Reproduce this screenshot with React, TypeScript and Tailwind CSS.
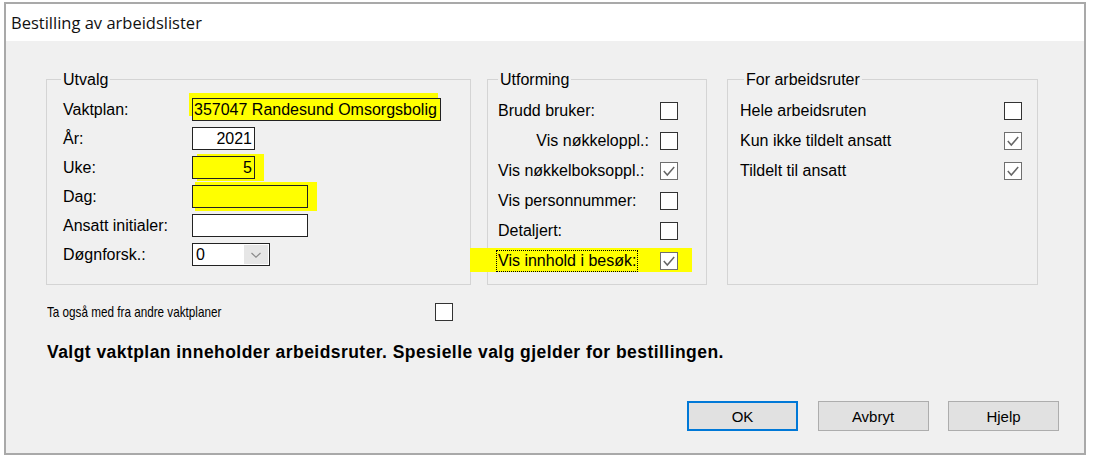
import React from "react";

function Box({ checked }: { checked?: boolean }) {
  return (
    <div
      className={`w-[18px] h-[18px] shrink-0 border bg-white flex items-center justify-center ${
        checked ? "border-[#6f6f6f]" : "border-[#333333]"
      }`}
    >
      {checked && (
        <svg width="14" height="14" viewBox="0 0 14 14">
          <path d="M1.8 7 L5.3 11 L12.2 3" fill="none" stroke="#666666" strokeWidth="1.5" />
        </svg>
      )}
    </div>
  );
}

function Chevron() {
  return (
    <svg width="12" height="8" viewBox="0 0 12 8">
      <path d="M1.5 2 L6 6.2 L10.5 2" fill="none" stroke="#8a8a8a" strokeWidth="1.2" />
    </svg>
  );
}

export default function App() {
  return (
    <div className="w-[1093px] h-[461px] bg-white pt-[2px] pl-[4px] font-['Liberation_Sans',Arial,sans-serif] text-[16px] text-black leading-none">
      <div className="w-[1082px] h-[453px] border-2 border-[#a9a9a9] flex flex-col">
        {/* Title bar */}
        <div className="h-[37px] bg-white flex items-center pl-[5px] pt-[1px] shrink-0">
          <span className="font-['Open_Sans',sans-serif] text-[16.5px] text-[#111]">Bestilling av arbeidslister</span>
        </div>
        {/* Body */}
        <div className="flex-1 bg-[#f0f0f0] pl-[40px] pt-[30px] flex flex-col">
          <div className="flex">
            {/* Utvalg */}
            <fieldset className="w-[425px] h-[214px] border border-[#d4d4d4] px-0">
              <legend className="ml-[14px] px-[2px] leading-[17px]">Utvalg</legend>
              <div className="pl-[16px] pt-[7px] flex flex-col">
                <div className="h-[29px] flex items-center">
                  <span className="w-[129px]">Vaktplan:</span>
                  <div className="w-[249px] h-[23px] border border-[#222] bg-[#ffff00] shadow-[-3px_-5px_0_0_#ffff00] flex items-center pl-[1px] whitespace-nowrap overflow-hidden">
                    357047 Randesund Omsorgsbolig
                  </div>
                </div>
                <div className="h-[29px] flex items-center">
                  <span className="w-[129px]">År:</span>
                  <div className="w-[63px] h-[23px] border border-[#222] bg-white flex items-center justify-end pr-[2px]">2021</div>
                </div>
                <div className="h-[29px] flex items-center">
                  <span className="w-[129px]">Uke:</span>
                  <div className="w-[63px] h-[23px] border border-[#222] bg-[#ffff00] shadow-[7px_0_0_2px_#ffff00] flex items-center justify-end pr-[2px]">5</div>
                </div>
                <div className="h-[29px] flex items-center">
                  <span className="w-[129px]">Dag:</span>
                  <div className="w-[116px] h-[23px] border border-[#222] bg-[#ffff00] shadow-[6px_0_0_3px_#ffff00]"></div>
                </div>
                <div className="h-[29px] flex items-center">
                  <span className="w-[129px]">Ansatt initialer:</span>
                  <div className="w-[116px] h-[23px] border border-[#222] bg-white"></div>
                </div>
                <div className="h-[29px] flex items-center">
                  <span className="w-[129px]">Døgnforsk.:</span>
                  <div className="w-[78px] h-[23px] border border-[#222] bg-white flex items-center">
                    <span className="pl-[3px]">0</span>
                    <div className="ml-auto mr-[1px] w-[24px] h-[19px] bg-[#e6e6e6] flex items-center justify-center">
                      <Chevron />
                    </div>
                  </div>
                </div>
              </div>
            </fieldset>

            {/* Utforming */}
            <fieldset className="ml-[16px] w-[220px] h-[214px] border border-[#d4d4d4] px-0">
              <legend className="ml-[10px] px-[2px] leading-[17px]">Utforming</legend>
              <div className="pl-[10px] pr-[28px] pt-[8px] flex flex-col">
                <div className="h-[30px] flex items-center justify-between">
                  <span>Brudd bruker:</span>
                  <Box />
                </div>
                <div className="h-[30px] flex items-center justify-end gap-[11px]">
                  <span>Vis nøkkeloppl.:</span>
                  <Box />
                </div>
                <div className="h-[30px] flex items-center justify-between">
                  <span>Vis nøkkelboksoppl.:</span>
                  <Box checked />
                </div>
                <div className="h-[30px] flex items-center justify-between">
                  <span>Vis personnummer:</span>
                  <Box />
                </div>
                <div className="h-[30px] flex items-center justify-between">
                  <span>Detaljert:</span>
                  <Box />
                </div>
                <div className="relative h-[30px] flex items-center justify-between">
                  <div className="absolute left-[-28px] right-[-14px] top-[2px] bottom-[4px] bg-[#ffff00]"></div>
                  <span className="relative -ml-[2px] px-[1px] py-[2px] border border-dotted border-black">Vis innhold i besøk:</span>
                  <div className="relative">
                    <Box checked />
                  </div>
                </div>
              </div>
            </fieldset>

            {/* For arbeidsruter */}
            <fieldset className="ml-[20px] w-[311px] h-[214px] border border-[#d4d4d4] px-0">
              <legend className="ml-[16px] px-[2px] leading-[17px]">For arbeidsruter</legend>
              <div className="pl-[12px] pr-[15px] pt-[8px] flex flex-col">
                <div className="h-[30px] flex items-center justify-between">
                  <span>Hele arbeidsruten</span>
                  <Box />
                </div>
                <div className="h-[30px] flex items-center justify-between">
                  <span>Kun ikke tildelt ansatt</span>
                  <Box checked />
                </div>
                <div className="h-[30px] flex items-center justify-between">
                  <span>Tildelt til ansatt</span>
                  <Box checked />
                </div>
              </div>
            </fieldset>
          </div>

          <div className="mt-[17px] h-[20px] flex items-center pl-[1px]">
            <div className="w-[388px] whitespace-nowrap">
              <span className="inline-block origin-left scale-x-[0.78] text-[15px]">Ta også med fra andre vaktplaner</span>
            </div>
            <Box />
          </div>

          <div className="mt-[22px] h-[18px] flex items-center pl-[1px] font-bold text-[17.5px] tracking-[0.45px] whitespace-nowrap">
            Valgt vaktplan inneholder arbeidsruter. Spesielle valg gjelder for bestillingen.
          </div>

          <div className="mt-[39px] flex justify-end gap-[19.5px] pr-[25px]">
            <button className="w-[111px] h-[30px] bg-[#e1e1e1] border-2 border-[#0078d7] text-[15px]">OK</button>
            <button className="w-[111px] h-[30px] bg-[#e1e1e1] border border-[#adadad] text-[15px]">Avbryt</button>
            <button className="w-[111px] h-[30px] bg-[#e1e1e1] border border-[#adadad] text-[15px]">Hjelp</button>
          </div>
        </div>
      </div>
    </div>
  );
}
